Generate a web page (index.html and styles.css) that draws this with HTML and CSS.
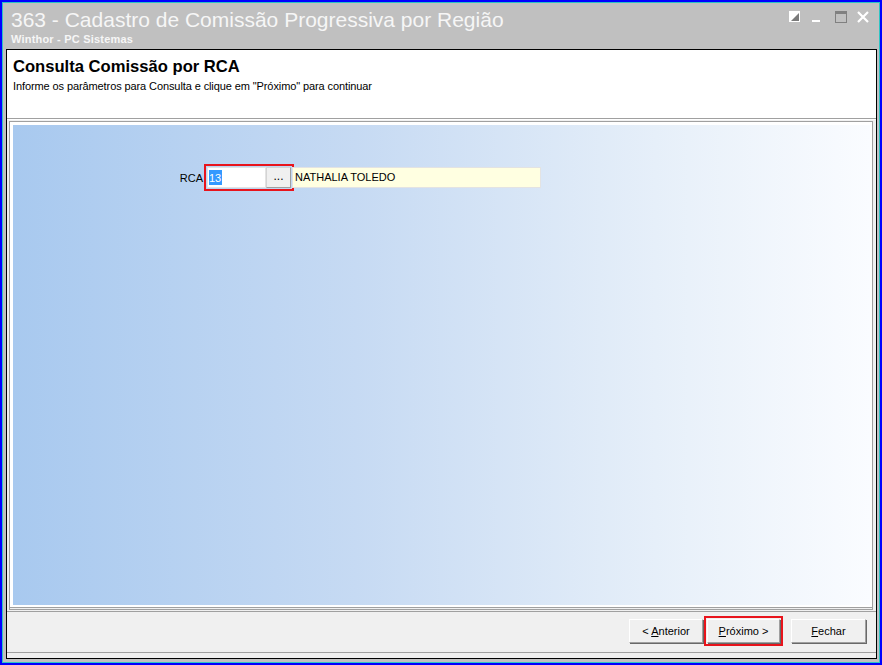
FILE: index.html
```html
<!DOCTYPE html>
<html lang="pt-BR">
<head>
    <meta charset="UTF-8">
    <title>363 - Cadastro de Comissão Progressiva por Região</title>
    <link rel="stylesheet" href="styles.css">
</head>
<body>
    <div class="window">
        <div class="titlebar">
            <div class="titles">
                <div class="app-title">363 - Cadastro de Comissão Progressiva por Região</div>
                <div class="app-sub">Winthor - PC Sistemas</div>
            </div>
            <div class="controls">
                <svg class="ctl ctl-dock" width="11" height="11" viewBox="0 0 11 11">
                    <rect x="0" y="0" width="11" height="11" fill="#fff"/>
                    <polygon points="10,2 10,10 2,10" fill="#7a7a7a"/>
                </svg>
                <svg class="ctl ctl-min" width="8" height="3" viewBox="0 0 8 3">
                    <rect x="0" y="0" width="8" height="2" fill="#fff"/>
                </svg>
                <svg class="ctl ctl-max" width="12" height="12" viewBox="0 0 12 12">
                    <rect x="0.5" y="0.5" width="11" height="11" fill="none" stroke="#808080"/>
                    <rect x="0" y="0" width="12" height="3" fill="#808080"/>
                </svg>
                <svg class="ctl ctl-close" width="12" height="12" viewBox="0 0 12 12">
                    <path d="M1 1 L11 11 M11 1 L1 11" stroke="#fff" stroke-width="2.2"/>
                </svg>
            </div>
        </div>

        <div class="client">
            <div class="wizard-head">
                <h1>Consulta Comissão por RCA</h1>
                <p>Informe os parâmetros para Consulta e clique em "Próximo" para continuar</p>
            </div>

            <div class="wizard-body">
                <div class="panel">
                    <div class="field-row">
                        <label class="field-label" for="rca">RCA</label>
                        <div class="lookup">
                            <div class="code-input"><span class="sel">13</span></div>
                            <button class="dots" type="button">...</button>
                        </div>
                        <div class="name-input">NATHALIA TOLEDO</div>
                    </div>
                </div>
            </div>

            <div class="wizard-foot">
                <button class="btn btn-prev" type="button">&lt; <u>A</u>nterior</button>
                <button class="btn btn-next" type="button"><u>P</u>róximo &gt;</button>
                <button class="btn btn-close" type="button"><u>F</u>echar</button>
            </div>
        </div>
    </div>
</body>
</html>
```

FILE: styles.css
```css
* {
    box-sizing: border-box;
}
body {
    margin: 0;
    font-family: "Liberation Sans", Arial, sans-serif;
    font-size: 11px;
    color: #000;
    background: #0000ff;
}

/* outer frame: blue border, cyan inner line, grey caption */
.window {
    width: 882px;
    height: 665px;
    border: 2px solid #0000ff;
    box-shadow: inset 0 0 0 1px #2ec4c4;
    background: #c0c0c0;
    padding: 1px 3px 4px 4px;
    display: flex;
    flex-direction: column;
}
.titlebar {
    height: 46px;
    display: flex;
    justify-content: space-between;
    align-items: flex-start;
}
.titles {
    padding: 5px 0 0 5px;
}
.app-title {
    font-size: 21px;
    color: #f6f6f6;
    line-height: 24px;
}
.app-sub {
    font-size: 11px;
    font-weight: bold;
    color: #f6f6f6;
    line-height: 13px;
    letter-spacing: 0.2px;
    margin-top: 1px;
}
.controls {
    display: flex;
    align-items: flex-start;
    padding: 8px 8px 0 0;
}
.ctl {
    display: block;
}
.ctl-dock {
    margin-right: 12px;
}
.ctl-min {
    margin-top: 9px;
    margin-right: 15px;
}
.ctl-max {
    margin-right: 10px;
}

/* client area */
.client {
    flex: 1;
    border: 1px solid #000;
    background: #f0f0f0;
    display: flex;
    flex-direction: column;
}
.wizard-head {
    background: #fff;
    height: 69px;
    padding: 7px 5px 0 6px;
    border-bottom: 1px solid #a0a0a0;
    box-shadow: 0 1px 0 #fff;
}
.wizard-head h1 {
    margin: 0;
    font-size: 16.6px;
    font-weight: bold;
    line-height: 20px;
}
.wizard-head p {
    margin: 3px 0 0;
    font-size: 11px;
    line-height: 13px;
    letter-spacing: -0.1px;
}
.wizard-body {
    padding: 2px 3px 0 2px;
}
.panel {
    height: 487px;
    border: 1px solid #a0a0a0;
    padding: 3px 2px 2px 3px;
    background: #fff;
    box-shadow: 0 2px 0 -1px #f0f0f0, 0 2px 0 0 #a0a0a0;
    position: relative;
}
.panel::before {
    content: "";
    position: absolute;
    inset: 3px 2px 2px 3px;
    background: linear-gradient(to right, #a8c9ef 0%, #c6daf3 40%, #e6eff9 75%, #fafcff 100%);
}
.field-row {
    position: relative;
    display: flex;
    align-items: center;
    padding-top: 42px;
}
.field-label {
    width: 192px;
    text-align: right;
    padding-right: 2px;
}
.lookup {
    display: flex;
    height: 21px;
    margin-left: 2px;
    outline: 2px solid #e8141c;
    outline-offset: 1px;
}
.code-input {
    width: 59px;
    background: #fff;
    border: 1px solid #e3e3e3;
    padding: 2px 1px;
}
.sel {
    display: inline-block;
    background: #3399ff;
    color: #fff;
    padding: 1px 1px 0 0;
    line-height: 14px;
}
.dots {
    width: 25px;
    height: 21px;
    margin: 0;
    padding: 0 0 4px;
    font: inherit;
    font-size: 12px;
    background: #f0f0f0;
    border: 1px solid #d4d4d4;
    border-right-color: #a0a0a0;
    border-bottom-color: #a0a0a0;
}
.name-input {
    width: 249px;
    height: 21px;
    margin-left: 1px;
    background: #ffffe1;
    border: 1px solid #e3e3e3;
    padding: 3px 2px 0;
}

/* wizard buttons */
.wizard-foot {
    flex: 1;
    display: flex;
    justify-content: flex-end;
    align-items: flex-start;
    padding: 7px 10px 0 0;
    border-bottom: 1px solid #a0a0a0;
    margin-top: 3px;
    margin-bottom: 5px;
    border-top: 1px solid #a0a0a0;
}
.btn {
    height: 24px;
    margin: 0;
    padding: 0;
    font: inherit;
    font-size: 11px;
    color: #000;
    background: #f0f0f0;
    border: 1px solid #fff;
    border-right-color: #a0a0a0;
    border-bottom-color: #a0a0a0;
    box-shadow: 1px 1px 0 #696969;
}
.btn u {
    text-decoration: underline;
}
.btn-prev {
    width: 74px;
}
.btn-next {
    width: 73px;
    margin-left: 4px;
    outline: 2px solid #e8141c;
    outline-offset: 1px;
}
.btn-close {
    width: 75px;
    margin-left: 11px;
}
```
